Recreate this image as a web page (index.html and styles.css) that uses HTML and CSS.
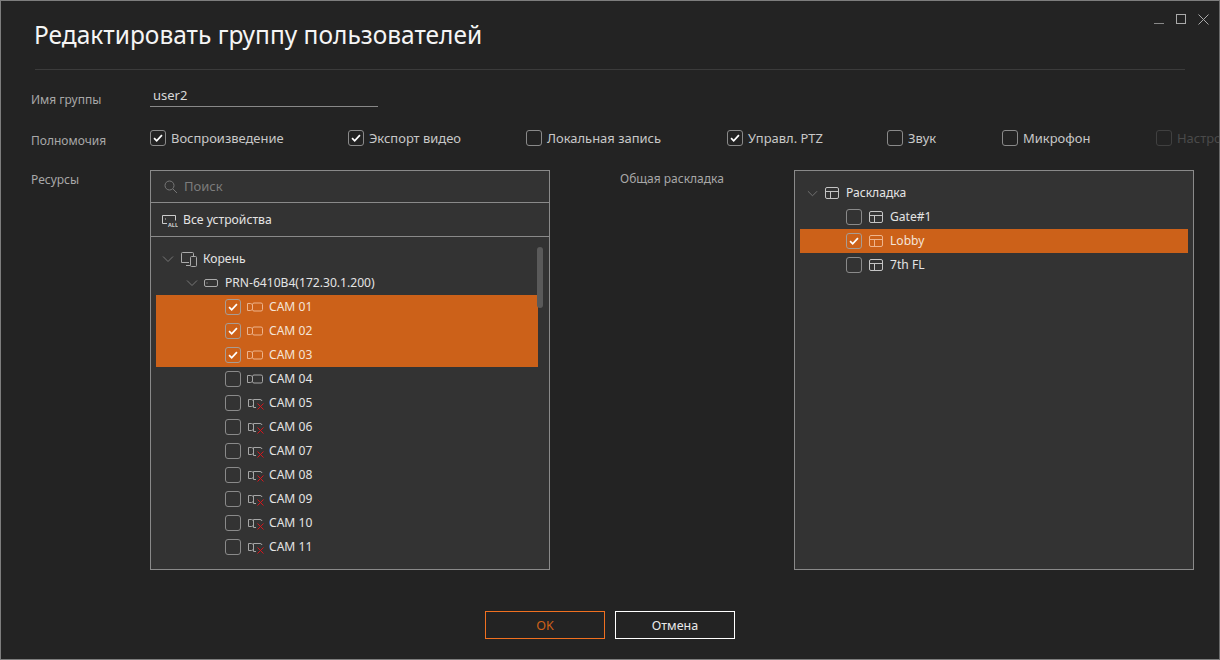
FILE: index.html
```html
<!DOCTYPE html>
<html lang="ru">

<head>
    <meta charset="UTF-8">
    <title>Редактировать группу пользователей</title>
    <link rel="stylesheet" href="styles.css">
</head>

<body>
    <svg class="sprite" width="0" height="0">
        <symbol id="chevron" viewBox="0 0 12 12"><path d="M1 3.5l5 5 5-5" fill="none" stroke="currentColor"/></symbol>
        <symbol id="check" viewBox="0 0 16 16"><path d="M3.5 8.2l3 3 6-6.4" fill="none" stroke="#fff" stroke-width="2"/></symbol>
        <symbol id="cam" viewBox="0 0 16 10"><g fill="none" stroke="currentColor"><rect x="5.5" y="1" width="10" height="8" rx="1.5"/><path d="M5.5 2.500l-2 -1h-3v7h3l2 -1"/></g></symbol>
        <symbol id="cam-off" viewBox="0 0 17 12"><g fill="none" stroke="currentColor"><path d="M6.500 9.500V1.500H13a2 2 0 0 1 2 1.500M6.500 9.500H9M6.500 2.500l-2 -1h-3v7h3l2 -1"/></g><path d="M10.500 5.500l6 6M16.500 5.500l-6 6" stroke="#d8161c" fill="none"/></symbol>
        <symbol id="layout" viewBox="0 0 14 14"><g fill="none" stroke="currentColor"><rect x="0.500" y="1.500" width="13" height="11" rx="1.500"/><path d="M0.500 5.500h13M5.500 5.500v7"/></g></symbol>
    </svg>

    <div class="window">
        <div class="window-btns">
            <span class="win-min"></span>
            <span class="win-max"></span>
            <svg class="win-close" width="11" height="11" viewBox="0 0 11 11"><path d="M.5.500l10 10M10.500.500l-10 10" stroke="#aaa" fill="none"/></svg>
        </div>

        <h1 class="title">Редактировать группу пользователей</h1>

        <div class="row name-row">
            <div class="row-label">Имя группы</div>
            <div class="name-input">user2</div>
        </div>

        <div class="row perm-row">
            <div class="row-label">Полномочия</div>
            <div class="perms">
                <label class="perm"><span class="box on"><svg><use href="#check"/></svg></span>Воспроизведение</label>
                <label class="perm"><span class="box on"><svg><use href="#check"/></svg></span>Экспорт видео</label>
                <label class="perm"><span class="box"></span>Локальная запись</label>
                <label class="perm"><span class="box on"><svg><use href="#check"/></svg></span>Управл. PTZ</label>
                <label class="perm"><span class="box"></span>Звук</label>
                <label class="perm"><span class="box"></span>Микрофон</label>
                <label class="perm disabled"><span class="box"></span>Настройка</label>
            </div>
        </div>

        <div class="row res-row">
            <div class="row-label">Ресурсы</div>
            <div class="panel">
                <div class="search">
                    <svg width="14" height="14" viewBox="0 0 14 14"><circle cx="5.500" cy="5.500" r="4.500" fill="none" stroke="#777"/><path d="M9 9l4 4" stroke="#777"/></svg>
                    <span>Поиск</span>
                </div>
                <div class="all-devices">
                    <svg width="16" height="14" viewBox="0 0 16 14"><path d="M5 10.500H.500v-8h13v5" fill="none" stroke="#ccc"/><path d="M3 6h1" stroke="#ccc"/><text x="6" y="13.500" class="all-text">ALL</text></svg>
                    <span>Все устройства</span>
                </div>
                <div class="tree">
                    <div class="node lvl-root">
                        <svg class="chev"><use href="#chevron"/></svg>
                        <svg class="ico-root" width="16" height="16" viewBox="0 0 16 16"><g fill="none" stroke="#aaa"><path d="M8 11.500H.500v-9a1 1 0 0 1 1-1h10a1 1 0 0 1 1 1V5M5 14.500h4"/><rect x="9.500" y="5.500" width="6" height="10" rx="1"/></g></svg>
                        <span>Корень</span>
                    </div>
                    <div class="node lvl-dev">
                        <svg class="chev"><use href="#chevron"/></svg>
                        <svg class="ico-dev" width="14" height="8" viewBox="0 0 14 8"><rect x=".5" y=".5" width="13" height="7" rx="1.500" fill="none" stroke="#aaa"/><path d="M3 3.500v1" stroke="#aaa"/></svg>
                        <span>PRN-6410B4(172.30.1.200)</span>
                    </div>
                    <div class="node lvl-cam sel"><span class="box on"><svg><use href="#check"/></svg></span><svg class="ico-cam"><use href="#cam"/></svg><span>CAM 01</span></div>
                    <div class="node lvl-cam sel"><span class="box on"><svg><use href="#check"/></svg></span><svg class="ico-cam"><use href="#cam"/></svg><span>CAM 02</span></div>
                    <div class="node lvl-cam sel"><span class="box on"><svg><use href="#check"/></svg></span><svg class="ico-cam"><use href="#cam"/></svg><span>CAM 03</span></div>
                    <div class="node lvl-cam"><span class="box"></span><svg class="ico-cam"><use href="#cam"/></svg><span>CAM 04</span></div>
                    <div class="node lvl-cam"><span class="box"></span><svg class="ico-off"><use href="#cam-off"/></svg><span>CAM 05</span></div>
                    <div class="node lvl-cam"><span class="box"></span><svg class="ico-off"><use href="#cam-off"/></svg><span>CAM 06</span></div>
                    <div class="node lvl-cam"><span class="box"></span><svg class="ico-off"><use href="#cam-off"/></svg><span>CAM 07</span></div>
                    <div class="node lvl-cam"><span class="box"></span><svg class="ico-off"><use href="#cam-off"/></svg><span>CAM 08</span></div>
                    <div class="node lvl-cam"><span class="box"></span><svg class="ico-off"><use href="#cam-off"/></svg><span>CAM 09</span></div>
                    <div class="node lvl-cam"><span class="box"></span><svg class="ico-off"><use href="#cam-off"/></svg><span>CAM 10</span></div>
                    <div class="node lvl-cam"><span class="box"></span><svg class="ico-off"><use href="#cam-off"/></svg><span>CAM 11</span></div>
                    <div class="scrollbar"></div>
                </div>
            </div>

            <div class="layout-label">Общая раскладка</div>
            <div class="panel layout-panel">
                <div class="node lay-root">
                    <svg class="chev"><use href="#chevron"/></svg>
                    <svg class="ico-lay"><use href="#layout"/></svg>
                    <span>Раскладка</span>
                </div>
                <div class="node lay-item"><span class="box"></span><svg class="ico-lay"><use href="#layout"/></svg><span>Gate#1</span></div>
                <div class="node lay-item sel"><span class="box on"><svg><use href="#check"/></svg></span><svg class="ico-lay"><use href="#layout"/></svg><span>Lobby</span></div>
                <div class="node lay-item"><span class="box"></span><svg class="ico-lay"><use href="#layout"/></svg><span>7th FL</span></div>
            </div>
        </div>

        <div class="footer">
            <button class="btn btn-ok">OK</button>
            <button class="btn">Отмена</button>
        </div>
    </div>
</body>

</html>
```

FILE: styles.css
```css
html, body {
    margin: 0;
    padding: 0;
}

body {
    background-color: #232323;
    font-family: "Noto Sans", "Open Sans", sans-serif;
    font-size: 13px;
    color: #e4e4e4;
}

.sprite {
    display: block;
    position: absolute;
}

.window {
    position: relative;
    box-sizing: border-box;
    width: 1220px;
    height: 660px;
    border: 1px solid #7d7d7d;
    border-right-color: #6a6a6a;
    padding: 0 34px 0 30px;
    overflow: hidden;
    display: flex;
    flex-direction: column;
}

.window-btns {
    position: absolute;
    top: 13px;
    right: 10px;
    display: flex;
    align-items: flex-start;
    gap: 12px;
}

.win-min {
    width: 10px;
    height: 1px;
    margin-top: 9px;
    border-top: 1px solid #888;
}

.win-max {
    box-sizing: border-box;
    width: 10px;
    height: 10px;
    border: 1px solid #aaa;
}

.title {
    margin: 0 0 0 4px;
    padding: 0;
    height: 69px;
    box-sizing: border-box;
    border-bottom: 1px solid #3b3b3b;
    font-size: 24.5px;
    font-weight: 400;
    line-height: 68px;
    text-indent: -1px;
    color: #f5f5f5;
    white-space: nowrap;
}

.row {
    display: flex;
}

.row-label {
    width: 119px;
    flex-shrink: 0;
    color: #a8a8a8;
    font-size: 12px;
}

.name-row {
    margin-top: 16px;
    height: 21px;
    align-items: flex-start;
}

.name-row .row-label {
    margin-top: 4px;
    line-height: 20px;
}

.name-input {
    box-sizing: border-box;
    width: 228px;
    height: 21px;
    border-bottom: 1px solid #888;
    padding-left: 3px;
    line-height: 19px;
    color: #d8d8d8;
}

.perm-row {
    margin-top: 23px;
    height: 16px;
    align-items: center;
}

.perm-row .row-label {
    margin-top: 4px;
}

.perms {
    display: grid;
    grid-template-columns: 198px 178px 201px 160px 115px 154px auto;
    white-space: nowrap;
}

.perm {
    display: flex;
    align-items: center;
    font-size: 12.95px;
    color: #c8c8c8;
}

.perm .box {
    margin-right: 5px;
}

.perm.disabled {
    color: #4a4a4a;
}

.perm.disabled .box {
    border-color: #404040;
}

.box {
    box-sizing: border-box;
    flex-shrink: 0;
    width: 16px;
    height: 16px;
    border: 1px solid #8a8a8a;
    border-radius: 3px;
    display: block;
}

.box svg {
    display: block;
    width: 14px;
    height: 14px;
}

.res-row {
    margin-top: 24px;
    height: 400px;
    align-items: flex-start;
}

.res-row > .row-label {
    line-height: 20px;
}

.panel {
    box-sizing: border-box;
    width: 400px;
    height: 400px;
    border: 1px solid #8a8a8a;
    background-color: #333333;
    flex-shrink: 0;
    display: flex;
    flex-direction: column;
}

.search {
    box-sizing: border-box;
    height: 32px;
    flex-shrink: 0;
    border-bottom: 1px solid #8a8a8a;
    padding-left: 13px;
    display: flex;
    align-items: center;
    gap: 6px;
    color: #7c7c7c;
}

.search span {
    padding-bottom: 1px;
}

.all-devices {
    box-sizing: border-box;
    height: 34px;
    flex-shrink: 0;
    border-bottom: 1px solid #8a8a8a;
    padding-left: 11px;
    display: flex;
    align-items: center;
    gap: 5px;
    font-size: 12.2px;
}

.all-text {
    font-size: 5.5px;
    font-weight: 700;
    fill: #ccc;
}

.tree {
    position: relative;
    flex: 1;
    padding: 10px 0 0 5px;
}

.node {
    box-sizing: border-box;
    height: 24px;
    display: flex;
    align-items: center;
    font-size: 12.1px;
    white-space: nowrap;
}

.node svg {
    flex-shrink: 0;
}

/* text sits a pixel above the icons */
.node > span:last-child {
    padding-bottom: 2px;
}

.node.sel {
    background-color: #cc6119;
    color: #f4e4d8;
}

.node.sel .box {
    border-color: #a79c94;
}

.node.sel .ico-cam,
.node.sel .ico-lay {
    color: #eeb48c;
}

.chev {
    width: 12px;
    height: 12px;
    color: #777;
}

.lvl-root {
    width: 382px;
    padding-left: 6px;
}

.ico-root {
    margin-left: 7px;
    margin-right: 6px;
}

.lvl-dev {
    width: 382px;
    padding-left: 30px;
}

.ico-dev {
    margin-left: 6px;
    margin-right: 7px;
}

.lvl-cam {
    width: 382px;
    padding-left: 69px;
}

.ico-cam {
    width: 16px;
    height: 10px;
    margin-left: 6px;
    margin-right: 6px;
    color: #a6a6a6;
}

.ico-off {
    width: 17px;
    height: 12px;
    margin-left: 6px;
    margin-right: 5px;
    margin-top: 2px;
    color: #a6a6a6;
}

.scrollbar {
    position: absolute;
    top: 10px;
    right: 6px;
    width: 6px;
    height: 61px;
    border-radius: 3px;
    background-color: #5a5a5a;
}

.layout-label {
    width: 174px;
    margin-left: 70px;
    flex-shrink: 0;
    color: #a8a8a8;
    font-size: 12px;
    line-height: 18px;
}

.layout-panel {
    padding: 10px 5px 0;
}

.lay-root {
    padding-left: 7px;
}

.lay-root .chev {
    width: 11px;
    height: 11px;
}

.ico-lay {
    width: 14px;
    height: 14px;
    margin-left: 7px;
    margin-right: 7px;
    color: #c4c4c4;
}

.lay-item {
    padding-left: 46px;
}

.footer {
    margin-top: 41px;
    display: flex;
    justify-content: center;
    gap: 10px;
    margin-left: -30px;
    margin-right: -34px;
}

.btn {
    box-sizing: border-box;
    width: 120px;
    height: 28px;
    padding: 0;
    background-color: transparent;
    border: 1px solid #fff;
    color: #e8e8e8;
    font-family: inherit;
    font-size: 12.5px;
}

.btn-ok {
    border-color: #f07020;
    color: #cc6119;
}
```
